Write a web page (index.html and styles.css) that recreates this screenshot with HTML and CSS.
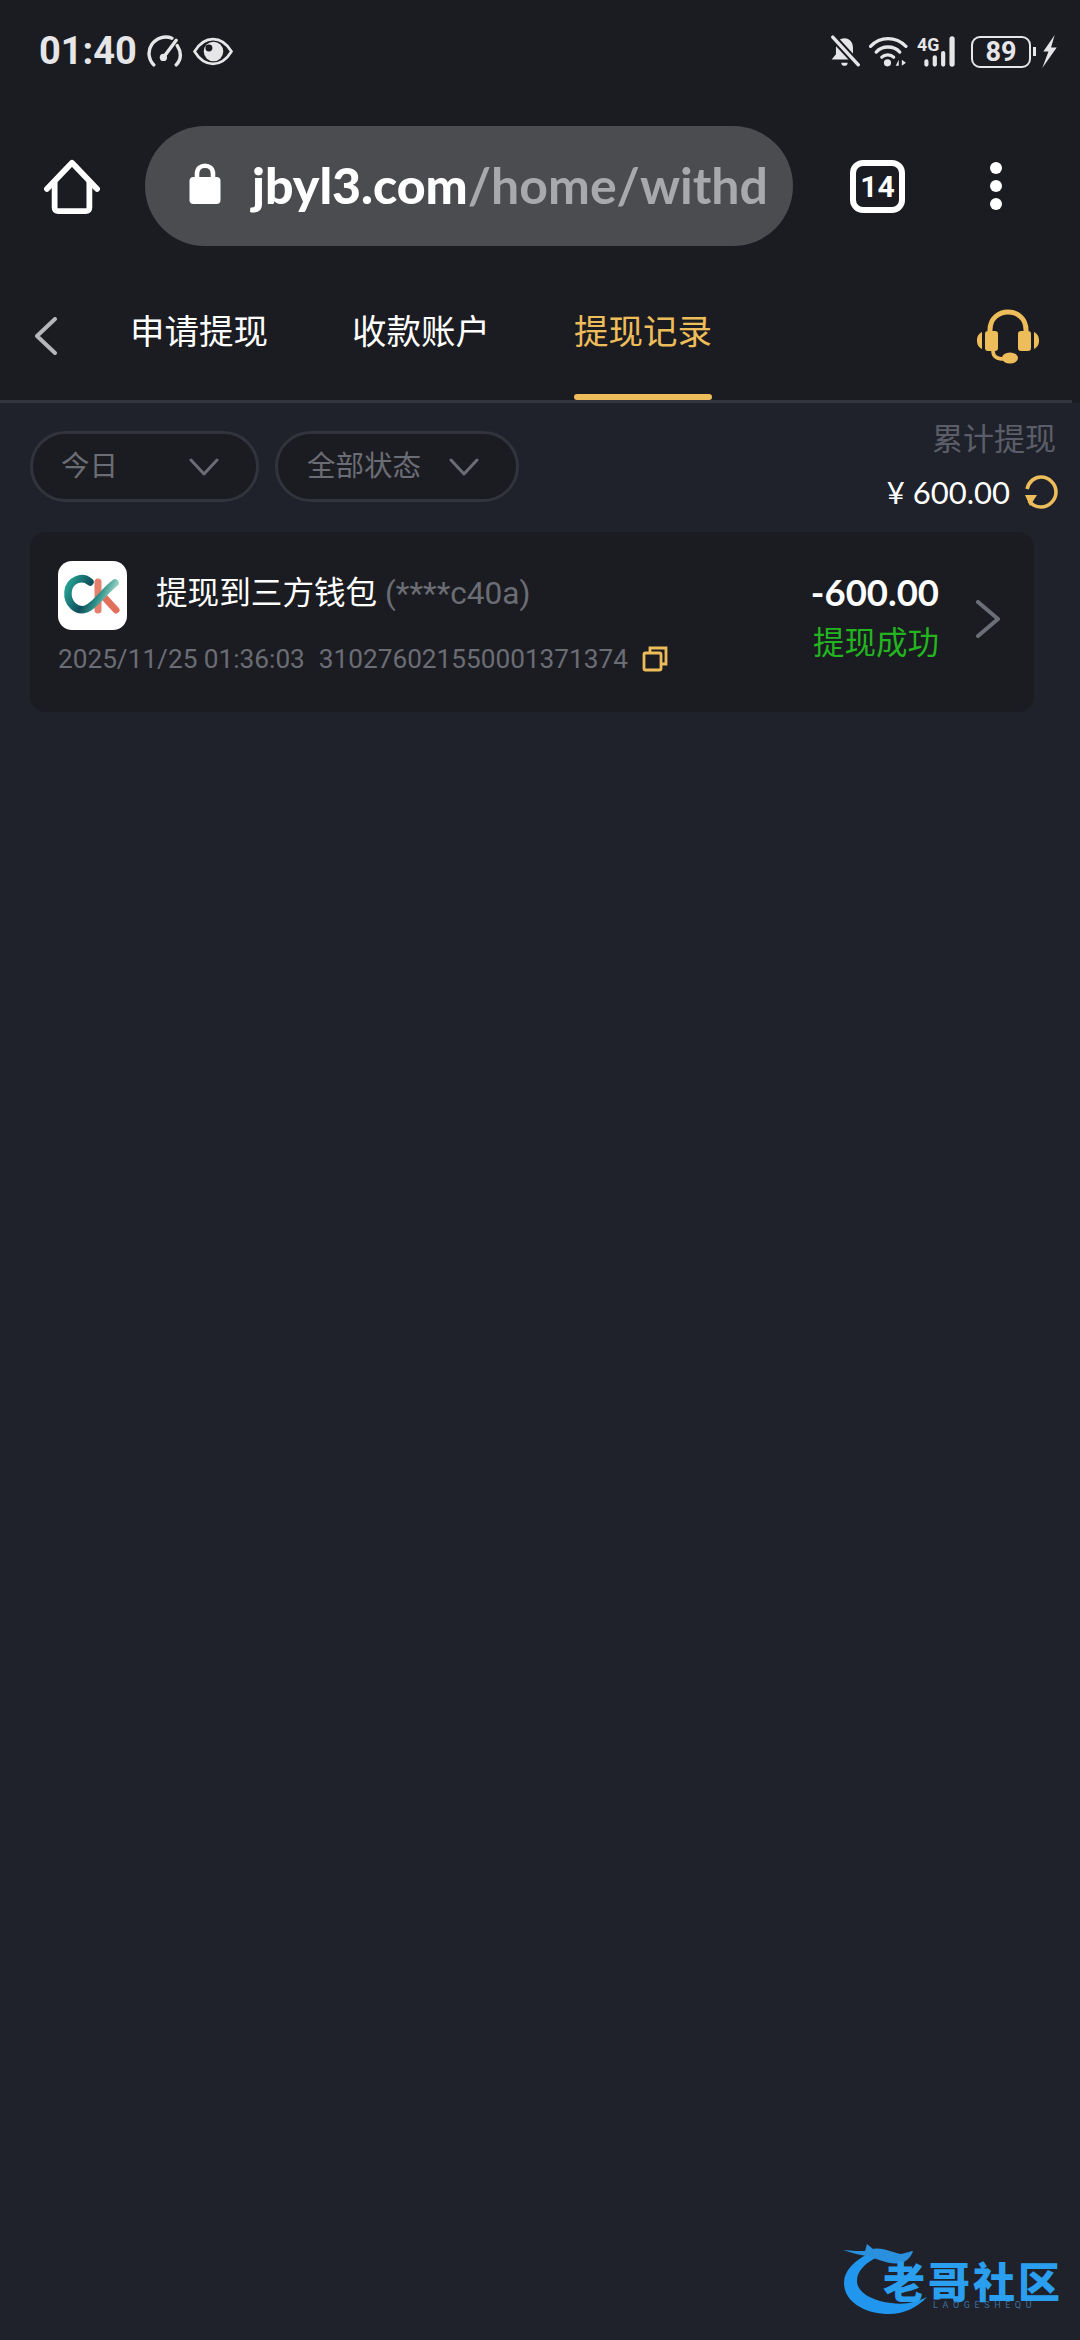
FILE: index.html
```html
<!DOCTYPE html>
<html lang="zh-CN">
<head>
    <meta charset="UTF-8">
    <meta name="viewport" content="width=device-width, initial-scale=1.0">
    <title>提现记录</title>
    <link rel="stylesheet" href="styles.css">
</head>
<body>
    <div class="statusbar">
        <div class="status-left">
            <span class="time">01:40</span>
            <svg class="icon-gauge" width="36" height="32" viewBox="0 0 33 30" fill="none" stroke="#e6e6e8" stroke-width="3.2" stroke-linecap="round">
                <path d="M6 28 C1 23 0 15 4 9 C8 3 16 0 23 3"/>
                <path d="M28 10 C32 16 32 23 27 28"/>
                <path d="M15 21 L27 5"/>
                <circle cx="15" cy="21" r="3.4" fill="#e6e6e8" stroke="none"/>
            </svg>
            <svg class="icon-eye" width="40" height="29" viewBox="0 0 39 28">
                <path d="M1.5 14 C7 5 13 2 19.5 2 C26 2 32 5 37.5 14 C32 23 26 26 19.5 26 C13 26 7 23 1.5 14 Z" fill="none" stroke="#e6e6e8" stroke-width="2.6"/>
                <circle cx="20" cy="14" r="9.5" fill="#e6e6e8"/>
                <circle cx="15.5" cy="10.5" r="3.4" fill="#1b1c21"/>
            </svg>
        </div>
        <div class="status-right">
            <svg width="30" height="33" viewBox="0 0 27 31">
                <path d="M13 3 C8 3 5 7 5 12 V18 L1 23 H25 L21 18 V12 C21 7 18 3 13 3 Z" fill="#e6e6e8"/>
                <path d="M10 26 H16 C16 30 10 30 10 26 Z" fill="#e6e6e8"/>
                <path d="M2 2 L26 28" stroke="#1b1c21" stroke-width="7"/>
                <path d="M2 2 L26 28" stroke="#e6e6e8" stroke-width="3.2" stroke-linecap="round"/>
            </svg>
            <svg class="icon-wifi" width="39" height="31" viewBox="0 0 38 30" fill="none" stroke="#e6e6e8" stroke-width="3.2" stroke-linecap="round">
                <path d="M1.5 10 C11 0 26 0 36 10"/>
                <path d="M7 15.5 C13 9 24 9 30 15.5"/>
                <path d="M12.5 20.5 C15.5 17.5 21 17.5 24 20.5"/>
                <circle cx="18" cy="26" r="3.5" fill="#e6e6e8" stroke="none"/>
                <path d="M29 23 L26 29 H29 Z M32 23 L36 26 L32 29 Z" fill="#e6e6e8" stroke="none"/>
            </svg>
            <svg class="icon-signal" width="45" height="33" viewBox="0 0 43 31" fill="#e6e6e8">
                <text x="0" y="15" class="net-label">4G</text>
                <rect x="7" y="23" width="4" height="7" rx="2"/>
                <rect x="15" y="19" width="4" height="11" rx="2"/>
                <rect x="23" y="15" width="4" height="15" rx="2"/>
                <rect x="31" y="1" width="5" height="29" rx="2.5"/>
            </svg>
            <div class="battery"><span>89</span></div>
            <span class="battery-nub"></span>
            <svg class="icon-bolt" width="17" height="33" viewBox="0 0 16 32" fill="#e6e6e8">
                <path d="M13 0 L2 16 L7 16 L1 32 L15 12 L9.5 12 Z"/>
            </svg>
        </div>
    </div>

    <div class="chrome">
        <svg width="56" height="58" viewBox="0 0 58 58" fill="none" stroke="#fff" stroke-width="6" stroke-linecap="round" stroke-linejoin="round">
            <path d="M3 31 L29 4 L55 31"/>
            <path d="M11 24 V50 C11 53 12 54 15 54 H43 C46 54 47 53 47 50 V24"/>
        </svg>
        <div class="urlbar">
            <svg width="32" height="44" viewBox="0 0 32 44">
                <path d="M8 20 V13 C8 2 24 2 24 13 V20" fill="none" stroke="#fff" stroke-width="4.6"/>
                <rect x="0.5" y="16" width="31" height="27" rx="4" fill="#fff"/>
            </svg>
            <div class="url"><b>jbyl3.com</b>/home/withd</div>
        </div>
        <div class="tabcount">14</div>
        <div class="dots"><i></i><i></i><i></i></div>
    </div>

    <div class="tabbar">
        <svg class="back" width="22" height="38" viewBox="0 0 22 38" fill="none" stroke="#b5b6ba" stroke-width="4" stroke-linecap="round" stroke-linejoin="round">
            <path d="M20 2 L2 19 L20 36"/>
        </svg>
        <a class="tab">申请提现</a>
        <a class="tab">收款账户</a>
        <a class="tab active">提现记录</a>
        <svg class="headset" width="62" height="56" viewBox="0 0 62 56">
            <path d="M13 25 V21 C13 -3 49 -3 49 21 V25" fill="none" stroke="#eebd5b" stroke-width="5"/>
            <rect x="8" y="22" width="13" height="20" rx="3" fill="#eebd5b"/>
            <rect x="41" y="22" width="13" height="20" rx="3" fill="#eebd5b"/>
            <path d="M5 23 V40 C1 38 0 35 0 31.500 C0 28 1 25 5 23 Z M57 23 V40 C61 38 62 35 62 31.500 C62 28 61 25 57 23 Z" fill="#eebd5b"/>
            <path d="M16 42 C16 48 20 50 27 50" fill="none" stroke="#eebd5b" stroke-width="3.6"/>
            <ellipse cx="33" cy="49" rx="8" ry="5.500" fill="#eebd5b"/>
        </svg>
    </div>

    <div class="filters">
        <div class="pills">
            <div class="pill pill-date">
                <span>今日</span>
                <svg width="32" height="18" viewBox="0 0 30 18" fill="none" stroke="#6b6d75" stroke-width="3" stroke-linecap="round" stroke-linejoin="round"><path d="M2 2 L15 16 L28 2"/></svg>
            </div>
            <div class="pill pill-state">
                <span>全部状态</span>
                <svg width="32" height="18" viewBox="0 0 30 18" fill="none" stroke="#6b6d75" stroke-width="3" stroke-linecap="round" stroke-linejoin="round"><path d="M2 2 L15 16 L28 2"/></svg>
            </div>
        </div>
        <div class="summary">
            <div class="summary-label">累计提现</div>
            <div class="summary-value">
                <span>¥ 600.00</span>
                <svg width="34" height="34" viewBox="0 0 34 34" fill="none" stroke="#eebd5b" stroke-width="3.6">
                    <path d="M3 14 C5 6 11 2 17 2 C25 2 32 9 32 17 C32 25 25 32 17 32 C12 32 8 30 5 26"/>
                    <path d="M1 20 H13 L6 31 Z" fill="#eebd5b" stroke="none"/>
                </svg>
            </div>
        </div>
    </div>

    <div class="card">
        <div class="card-main">
            <div class="card-top">
                <div class="logo">
                    <svg width="69" height="69" viewBox="0 0 69 69" fill="none" stroke-linecap="round">
                        <defs>
                            <linearGradient id="ckTeal" x1="0" y1="0" x2="1" y2="0.300">
                                <stop offset="0" stop-color="#27a596"/>
                                <stop offset="0.500" stop-color="#0f4f5c"/>
                                <stop offset="0.750" stop-color="#2d8f88"/>
                                <stop offset="1" stop-color="#8fcdbf"/>
                            </linearGradient>
                        </defs>
                        <path d="M40 21 V49" stroke="#e6806c" stroke-width="7"/>
                        <path d="M46 36 L58 49" stroke="#e0705c" stroke-width="7"/>
                        <path d="M32 21 C24 14 11 19 10 31 C9 43 19 51 28 48 C38 44 46 30 57 22" stroke="url(#ckTeal)" stroke-width="7.500"/>
                    </svg>
                </div>
                <div class="card-title">提现到三方钱包 <span>(****c40a)</span></div>
            </div>
            <div class="card-meta">
                <span>2025/11/25 01:36:03</span>
                <span>310276021550001371374</span>
                <svg width="26" height="26" viewBox="0 0 26 26" fill="none" stroke="#eebd5b" stroke-width="2.8">
                    <rect x="2" y="7" width="17" height="17" rx="1.500"/>
                    <path d="M8 7 V2 H24 V18 H19"/>
                </svg>
            </div>
        </div>
        <div class="card-side">
            <div class="amount">-600.00</div>
            <div class="state">提现成功</div>
        </div>
        <svg class="next" width="24" height="38" viewBox="0 0 24 38" fill="none" stroke="#6c6e77" stroke-width="4" stroke-linecap="round" stroke-linejoin="round">
            <path d="M2 2 L22 19 L2 36"/>
        </svg>
    </div>

    <div class="watermark">
        <svg width="90" height="74" viewBox="0 0 90 74">
            <path d="M30 8 C10 18 1 28 1 40 C1 60 24 71 46 71 C60 71 74 65 84 54 C72 60 60 62 48 60 C30 58 14 50 14 38 C14 28 22 20 36 13 Z" fill="#2196ee"/>
            <path d="M0 7 C10 8 16 8 22 8 L24 1 L30 6 C40 4 50 10 58 11 C64 10 68 8 70 8 C68 14 64 18 58 20 C46 22 34 16 28 14 C18 12 8 10 0 7 Z" fill="#2a8fdc"/>
        </svg>
        <div class="wm-text">老哥社区</div>
        <div class="wm-sub">LAOGESHEQU</div>
    </div>
</body>
</html>
```

FILE: styles.css
```css
* {
    box-sizing: border-box;
}

html, body {
    margin: 0;
    padding: 0;
}

body {
    width: 1080px;
    height: 2340px;
    overflow: hidden;
    position: relative;
    background-color: #1f222b;
    font-family: Roboto, "Noto Sans CJK SC", sans-serif;
    color: #fff;
}

/* status bar */
.statusbar {
    height: 102px;
    padding: 35px 22px 0 39px;
    background-color: #1b1c21;
    display: flex;
    justify-content: space-between;
    align-items: flex-start;
}

.status-left, .status-right {
    display: flex;
    align-items: center;
}

.status-left {
    gap: 10px;
}

.status-right {
    gap: 9px;
}

.time {
    font-size: 38px;
    font-weight: 700;
    line-height: 32px;
    color: #e6e6e8;
}

.net-label {
    font-size: 17px;
    font-weight: 700;
}

.battery {
    width: 60px;
    height: 32px;
    border: 2px solid #e6e6e8;
    border-radius: 9px;
    display: flex;
    align-items: center;
    justify-content: center;
    font-size: 27px;
    font-weight: 700;
    color: #e6e6e8;
}

.battery-nub {
    width: 3px;
    height: 9px;
    background-color: #e6e6e8;
    margin-left: -7px;
}

.icon-bolt {
    margin-left: -4px;
}

/* browser toolbar */
.chrome {
    height: 170px;
    padding: 24px 0 0 44px;
    background-color: #1b1c21;
    display: flex;
    align-items: flex-start;
    position: relative;
}

.chrome > svg {
    margin-top: 32px;
}

.urlbar {
    width: 648px;
    height: 120px;
    margin-left: 45px;
    padding-left: 44px;
    border-radius: 60px;
    background-color: #4b4c50;
    display: flex;
    align-items: center;
    gap: 31px;
    overflow: hidden;
}

.urlbar svg {
    flex: none;
    margin-bottom: 6px;
}

.url {
    font-family: Lato, sans-serif;
    font-size: 50px;
    font-weight: 700;
    color: #a8a9ac;
    white-space: nowrap;
    margin-bottom: 2px;
}

.url b {
    color: #fff;
}

.tabcount {
    width: 55px;
    height: 53px;
    margin: 34px 0 0 57px;
    border: 6px solid #fff;
    border-radius: 13px;
    display: flex;
    align-items: center;
    justify-content: center;
    font-size: 30px;
    font-weight: 700;
}

.dots {
    margin: 36px 0 0 85px;
    display: flex;
    flex-direction: column;
    gap: 6px;
}

.dots i {
    display: block;
    width: 12px;
    height: 12px;
    border-radius: 50%;
    background-color: #fff;
}

/* tabs */
.tabbar {
    width: 1072px;
    height: 131px;
    padding-left: 35px;
    border-bottom: 3px solid #33353f;
    background-color: #1b1c21;
    display: flex;
    align-items: stretch;
    box-shadow: 8px 0 0 #1b1c21;
}

.back {
    margin-top: 45px;
}

.tab {
    padding-top: 36px;
    font-size: 34.500px;
    line-height: 48px;
    margin-left: 84px;
    position: relative;
    white-space: nowrap;
}

.back + .tab {
    margin-left: 73px;
}

.tab.active {
    color: #eebd5b;
}

.tab.active::after {
    content: "";
    position: absolute;
    left: 0;
    right: 0;
    bottom: 0;
    height: 6px;
    border-radius: 3px;
    background-color: #eebd5b;
}

.headset {
    margin: 37px 0 0 auto;
    transform: translateX(-33px);
}

/* filter row */
.filters {
    height: 129px;
    padding: 28px 22px 0 30px;
    display: flex;
    justify-content: space-between;
    align-items: flex-start;
}

.pills {
    display: flex;
    gap: 16px;
}

.pill {
    height: 71px;
    border: 3px solid #32343d;
    border-radius: 36px;
    background-color: #1b1c21;
    display: flex;
    align-items: center;
    justify-content: space-between;
    font-size: 28.500px;
    line-height: 36px;
    color: #6b6d75;
}

.pill-date {
    width: 229px;
    padding: 0 36px 0 28px;
}

.pill-state {
    width: 244px;
    padding: 0 36px 0 29px;
}

.summary {
    text-align: right;
    margin-top: -13px;
}

.summary-label {
    font-size: 31px;
    line-height: 44px;
    color: #5b5e68;
    margin-right: 2px;
}

.summary-value {
    margin-top: 10px;
    display: flex;
    align-items: center;
    gap: 14px;
    font-family: Lato, sans-serif;
    font-size: 31px;
    line-height: 40px;
}

/* record card */
.card {
    width: 1004px;
    height: 180px;
    margin-left: 30px;
    padding: 29px 34px 0 28px;
    border-radius: 16px;
    background-color: #1b1c21;
    display: flex;
    align-items: flex-start;
}

.card-main {
    flex: 1;
}

.card-top {
    display: flex;
    align-items: center;
    gap: 29px;
}

.logo {
    width: 69px;
    height: 69px;
    border-radius: 14px;
    background-color: #fff;
}

.logo svg {
    display: block;
}

.card-title {
    font-size: 31.600px;
    line-height: 44px;
    margin-bottom: 3px;
    white-space: nowrap;
}

.card-title span {
    color: #6b6d75;
}

.card-meta {
    margin-top: 11px;
    display: flex;
    align-items: center;
    gap: 14px;
    font-size: 26.200px;
    line-height: 36px;
    color: #6b6d75;
    white-space: nowrap;
}

.card-side {
    text-align: right;
    margin-top: 11px;
}

.amount {
    font-family: Lato, sans-serif;
    font-size: 36.500px;
    font-weight: 700;
    line-height: 40px;
}

.state {
    margin-top: 9px;
    font-size: 31.500px;
    line-height: 46px;
    color: #22b520;
}

.next {
    margin: 39px 0 0 37px;
}

/* watermark, sits over the page */
.watermark {
    position: absolute;
    left: 843px;
    top: 2243px;
    width: 230px;
    height: 82px;
}

.wm-text {
    position: absolute;
    left: 40px;
    top: 26px;
    font-size: 42px;
    font-weight: 900;
    line-height: 30px;
    letter-spacing: 3px;
    white-space: nowrap;
    color: #2a9ff0;
}

.wm-sub {
    position: absolute;
    left: 90px;
    top: 58px;
    font-size: 9px;
    line-height: 8px;
    letter-spacing: 4.600px;
    white-space: nowrap;
    color: #3a6f9c;
}
```
